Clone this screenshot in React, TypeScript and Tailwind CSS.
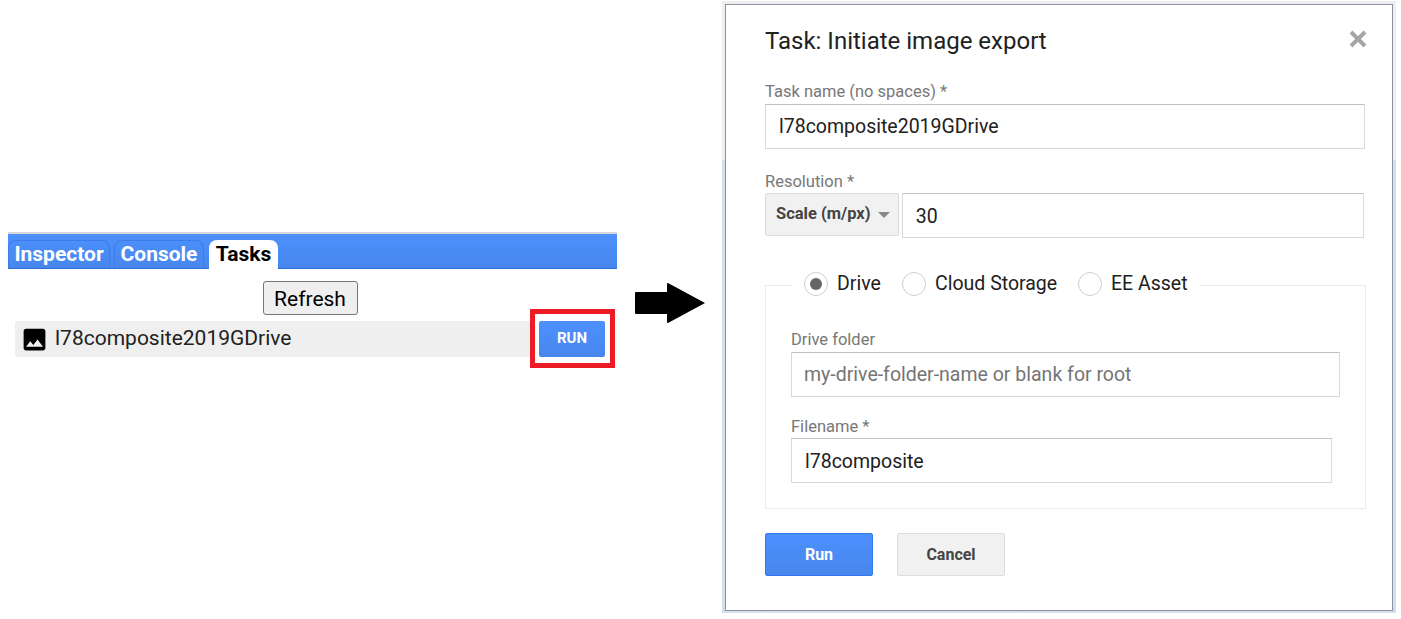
function ImageIcon() {
  return (
    <svg viewBox="0 0 24 24" className="h-[29px] w-[29px] shrink-0" fill="#000">
      <path d="M21 19V5c0-1.1-.9-2-2-2H5c-1.1 0-2 .9-2 2v14c0 1.1.9 2 2 2h14c1.1 0 2-.9 2-2zM8.5 13.5l2.5 3.01L14.5 12l4.5 6H5l3.5-4.5z" />
    </svg>
  )
}

function Radio({ label, checked, className }: { label: string; checked?: boolean; className: string }) {
  return (
    <label className={`flex items-center ${className}`}>
      <span className="flex h-6 w-6 shrink-0 items-center justify-center rounded-full border border-[#d0d0d0] bg-white">
        {checked && <span className="h-3 w-3 rounded-full bg-[#666]" />}
      </span>
      <span className="ml-[9px] text-[19.5px] leading-6 text-[#212121]">{label}</span>
    </label>
  )
}

function Field({ value, className, placeholder }: { value?: string; className: string; placeholder?: boolean }) {
  return (
    <div
      className={`flex h-[45px] items-center border border-[#d9d9d9] border-t-[#c0c0c0] text-[19.5px] ${
        placeholder ? 'pl-3 text-[#757575]' : 'pl-[13px] text-[#212121]'
      } ${className}`}
    >
      {value}
    </div>
  )
}

export default function App() {
  return (
    <div className="flex h-[619px] w-[1401px] overflow-hidden bg-white font-['Roboto',sans-serif]">
      {/* Tasks panel */}
      <div className="ml-2 mt-[232px] w-[609px] shrink-0">
        <div className="flex h-[37px] items-end border-t-2 border-b border-t-[#d8d8d8] border-b-[#2f6fd6] bg-gradient-to-b from-[#4d90fe] to-[#4787ed] text-[21px] font-bold">
          <div className="flex h-[28px] w-[102px] items-center justify-center rounded-t-lg border border-b-0 border-[#3b7de8] text-white">
            Inspector
          </div>
          <div className="ml-1 flex h-[28px] w-[90px] items-center justify-center rounded-t-lg border border-b-0 border-[#3b7de8] text-white">
            Console
          </div>
          <div className="-mb-px ml-[5px] flex h-[29px] w-[69px] items-center justify-center rounded-t-lg bg-white text-black">
            Tasks
          </div>
        </div>
        <div className="mt-3 flex justify-center pr-[5px]">
          <button className="h-[34px] w-[95px] rounded-[3px] border border-[#767676] bg-[#efefef] pt-[2px] text-[21px] text-black">
            Refresh
          </button>
        </div>
        <div className="relative ml-[7px] mt-[6px] flex h-9 w-[515px] items-center rounded-l-[3px] bg-[#efefef] pl-[5px]">
          <ImageIcon />
          <span className="ml-[6px] pb-px text-[21px] text-[#212121]">l78composite2019GDrive</span>
          <div className="absolute left-[515px] top-[-12px] flex h-[59px] w-[85px] items-start border-[5px] border-[#ed1c24] bg-white pl-1 pt-[7px]">
            <button className="h-9 w-[66px] rounded-[2px] bg-gradient-to-b from-[#4d90fe] to-[#4787ed] pb-[2px] text-[15px] font-bold text-white">
              RUN
            </button>
          </div>
        </div>
      </div>

      {/* Arrow */}
      <svg viewBox="0 0 70 40" className="ml-[18px] mt-[283px] h-10 w-[70px] shrink-0" fill="#000">
        <path d="M0 10 Q0 9 1 9 H32 V1 Q32 0 33 0 L70 20 L33 40 Q32 40 32 39 V31 H1 Q0 31 0 30 Z" />
      </svg>

      {/* Export dialog */}
      <div className="ml-[17px] mt-px h-[612px] w-[674px] shrink-0 bg-gradient-to-b from-[#efefef] from-[26%] to-[#d5deec] to-[26%] pb-[2px] pl-[3px] pr-[3px] pt-[3px]">
        <div className="relative h-full border border-[#8a93a5] bg-white pl-[39px] pr-[28px] pt-[19px]">
          <h1 className="text-[24px] font-normal leading-[34px] text-[#212121]">Task: Initiate image export</h1>
          <svg viewBox="0 0 18 18" className="absolute right-[25px] top-[25px] h-[18px] w-[18px]" stroke="#a6a6a6" strokeWidth="4">
            <path d="M2 2 16 16M16 2 2 16" />
          </svg>

          <div className="mt-[24px] text-[16.5px] leading-[20px] text-[#777]">Task name (no spaces) *</div>
          <Field value="l78composite2019GDrive" className="mt-[2px] w-[600px]" />

          <div className="mt-[23px] text-[16.5px] leading-[20px] text-[#777]">Resolution *</div>
          <div className="mt-px flex gap-[3px]">
            <div className="flex h-[43px] w-[134px] items-center rounded-[2px] border border-[#dcdcdc] bg-[#f1f1f1] pl-[10px] text-[16.5px] font-bold text-[#444]">
              Scale (m/px)
              <span className="ml-[7px] h-0 w-0 border-x-[6px] border-t-[6px] border-x-transparent border-t-[#888]" />
            </div>
            <Field value="30" className="w-[463px] pt-[2px]" />
          </div>

          <fieldset className="mt-[34px] h-[237px] w-[600px] border border-[#ebebeb] px-[25px]">
            <legend className="ml-px flex h-[26px] items-start px-[12px]">
              <Radio label="Drive" checked className="w-[98px]" />
              <Radio label="Cloud Storage" className="w-[176px]" />
              <Radio label="EE Asset" className="" />
            </legend>
            <div className="mt-[32px] text-[16.5px] leading-[20px] text-[#777]">Drive folder</div>
            <Field value="my-drive-folder-name or blank for root" placeholder className="mt-[2px] w-[549px]" />
            <div className="mt-[20px] text-[16.5px] leading-[20px] text-[#777]">Filename *</div>
            <Field value="l78composite" className="mt-px w-[541px] pt-[2px]" />
          </fieldset>

          <div className="mt-6 flex gap-6">
            <button className="h-[43px] w-[108px] rounded-[2px] border border-[#3079ed] bg-gradient-to-b from-[#4d90fe] to-[#4787ed] text-[16px] font-bold text-white">
              Run
            </button>
            <button className="h-[43px] w-[108px] rounded-[2px] border border-[#dcdcdc] bg-[#f1f1f1] text-[16px] font-bold text-[#444]">
              Cancel
            </button>
          </div>
        </div>
      </div>
    </div>
  )
}
